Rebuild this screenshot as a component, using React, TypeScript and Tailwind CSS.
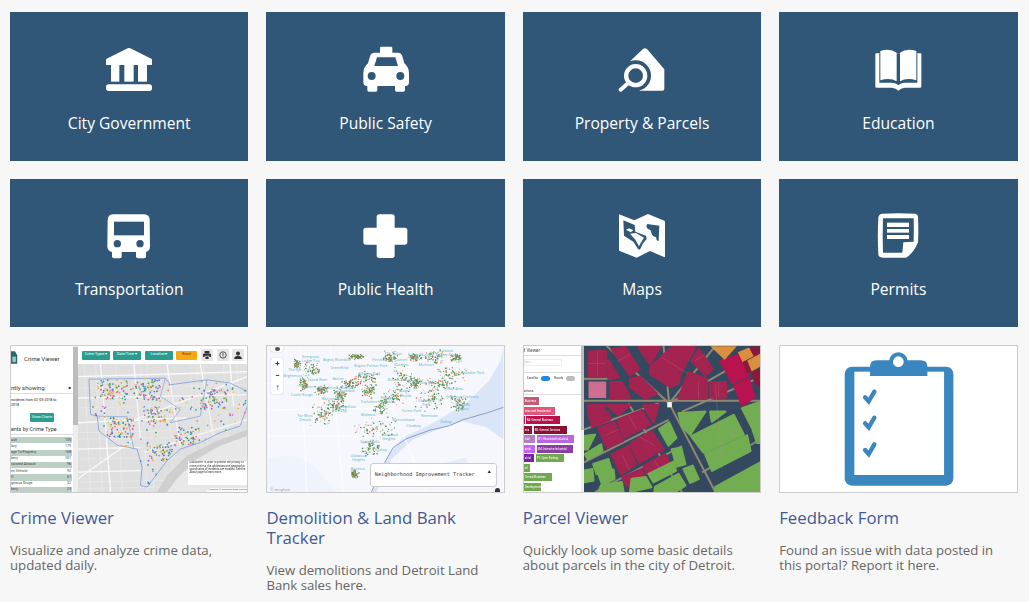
import React from "react";

const TILE = "#305778";

function makeRandom(seed: number) {
  let s = seed;
  return () => {
    s = (s * 16807) % 2147483647;
    return s / 2147483647;
  };
}

function insidePoly(x: number, y: number, poly: number[][]) {
  let hit = false;
  for (let i = 0, j = poly.length - 1; i < poly.length; j = i++) {
    const [xi, yi] = poly[i];
    const [xj, yj] = poly[j];
    if (yi > y !== yj > y && x < ((xj - xi) * (y - yi)) / (yj - yi) + xi) hit = !hit;
  }
  return hit;
}

/* ---------- tile icons, drawn on a 144 unit box ---------- */

function BankIcon() {
  return (
    <>
      <path d="M68 7 Q72 5 76 7 L139 38 Q141 39 141 42 V57 H3 V42 Q3 39 5 38Z" fill="#fff" />
      <rect x="18" y="57" width="25" height="50" fill="#fff" />
      <rect x="58" y="57" width="28" height="50" fill="#fff" />
      <rect x="99" y="57" width="27" height="50" fill="#fff" />
      <rect x="3" y="115" width="138" height="20" rx="8" fill="#fff" />
    </>
  );
}

function TaxiIcon() {
  return (
    <>
      <rect x="54" y="2" width="37" height="22" rx="4" fill="#fff" />
      <path d="M36 20 H109 Q117 20 120 28 L127 52 Q141 64 141 82 V108 Q141 120 130 120 H15 Q4 120 4 108 V82 Q4 64 18 52 L25 28 Q28 20 36 20Z" fill="#fff" />
      <rect x="16" y="110" width="30" height="27" rx="5" fill="#fff" />
      <rect x="99" y="110" width="30" height="27" rx="5" fill="#fff" />
      <path d="M45 34 H100 L108 60 H37Z" fill={TILE} />
      <circle cx="29" cy="90" r="12" fill={TILE} />
      <circle cx="115" cy="90" r="12" fill={TILE} />
    </>
  );
}

function PropertyIcon() {
  return (
    <>
      <path d="M75 9 Q81 4 87 9 L139 70 V128 Q139 134 133 134 H65 L53 89 L36 46Z" fill="#fff" />
      <circle cx="53" cy="89" r="46" fill={TILE} />
      <circle cx="53" cy="89" r="28.5" fill="none" stroke="#fff" strokeWidth="13" />
      <path d="M30 112 L8 131" stroke="#fff" strokeWidth="12" strokeLinecap="round" />
    </>
  );
}

function BookIcon() {
  return (
    <>
      <path d="M4 24 Q4 22 6 22 H140 Q142 22 142 24 V122 Q142 125 138 125 H92 Q80 126 73 134 Q66 126 54 125 H8 Q4 125 4 122Z" fill="#fff" />
      <path d="M16 22 H130 V110 H94 Q80 110 73 118 Q66 110 52 110 H16Z" fill={TILE} />
      <path d="M19 15 Q48 6 68 20 V106 Q48 94 19 103Z" fill="#fff" />
      <path d="M78 20 Q98 6 127 15 V103 Q98 94 78 106Z" fill="#fff" />
    </>
  );
}

function BusIcon() {
  return (
    <>
      <path d="M24 4 H118 Q133 5 134 20 L135 100 Q135 116 120 117 H22 Q8 116 7 100 L8 20 Q9 5 24 4Z" fill="#fff" />
      <rect x="21" y="105" width="29" height="31" rx="6" fill="#fff" />
      <rect x="93" y="105" width="30" height="31" rx="6" fill="#fff" />
      <rect x="27" y="26" width="90" height="41" fill={TILE} />
      <circle cx="37" cy="92" r="11" fill={TILE} />
      <circle cx="105" cy="92" r="11" fill={TILE} />
    </>
  );
}

function PlusIcon() {
  return (
    <>
      <rect x="44" y="4" width="54" height="131" rx="8" fill="#fff" />
      <rect x="4" y="44" width="132" height="51" rx="8" fill="#fff" />
    </>
  );
}

function MapIcon() {
  return (
    <>
      <path d="M3 4 L49 22 L90 3 L139 23 Q141 24 141 26 V131 Q141 133 138 132 L96 114 L56 134 L5 114 Q3 113 3 111Z" fill="#fff" />
      <path d="M16 22 L50 36 L52 56 L84 68 L86 78 L74 92 L66 110 L60 108 L46 86 L18 68Z" fill={TILE} />
      <path d="M24 50 L34 46 L46 52 L38 58Z" fill="#fff" />
      <path d="M36 62 L54 60 L78 74 L68 90 L63 100 L52 80Z" fill="#fff" />
      <path d="M88 33 Q82 40 90 48 Q100 50 100 60 Q104 72 114 72 L116 82 L122 84 L124 38Z" fill={TILE} />
    </>
  );
}

function PermitIcon() {
  return (
    <>
      <path d="M24 2 Q72 -1 122 2 Q131 3 132 12 Q134 50 132 88 Q118 122 96 134 H26 Q14 134 13 124 Q10 70 13 14 Q14 3 24 2Z" fill="#fff" />
      <path d="M27 16 H119 Q120 50 119 86 L88 88 L85 119 H27 Q25 70 27 16Z" fill={TILE} />
      <rect x="39" y="29" width="66" height="13" fill="#fff" />
      <rect x="39" y="48" width="66" height="11" fill="#fff" />
      <rect x="39" y="66" width="66" height="12" fill="#fff" />
    </>
  );
}

const categories = [
  { label: "City Government", Icon: BankIcon },
  { label: "Public Safety", Icon: TaxiIcon },
  { label: "Property & Parcels", Icon: PropertyIcon },
  { label: "Education", Icon: BookIcon },
  { label: "Transportation", Icon: BusIcon },
  { label: "Public Health", Icon: PlusIcon },
  { label: "Maps", Icon: MapIcon },
  { label: "Permits", Icon: PermitIcon },
];

/* ---------- crime viewer thumbnail ---------- */

const crimeOutline = [
  [265, 118], [495, 115], [510, 135], [620, 120], [690, 130], [742, 155], [742, 200], [720, 260],
  [660, 280], [600, 310], [540, 330], [500, 365], [440, 445], [420, 440], [425, 385], [410, 330],
  [350, 318], [295, 275], [290, 230], [270, 225],
];

function crimeDots() {
  const rand = makeRandom(4217);
  const colors = ["#2a9d8f", "#e86fa8", "#e8a33d", "#8a5cc4", "#3f8fd2", "#5aa84f", "#d9d24a"];
  const hot = [[560, 290], [470, 230], [440, 150], [340, 150], [640, 180], [360, 265], [480, 340]];
  const dots: { x: number; y: number; c: string }[] = [];
  while (dots.length < 540) {
    const h = hot[Math.floor(rand() * hot.length)];
    const near = rand() < 0.6;
    const x = near ? h[0] + (rand() - 0.5) * 80 : 265 + rand() * 477;
    const y = near ? h[1] + (rand() - 0.5) * 60 : 115 + rand() * 330;
    if (!insidePoly(x, y, crimeOutline)) continue;
    dots.push({ x, y, c: colors[Math.floor(rand() * colors.length)] });
  }
  return dots;
}

function CrimeMap() {
  const roads = [
    "232,110 742,95", "232,175 742,165", "232,250 560,235", "232,330 420,325", "232,400 420,395",
    "300,72 330,460", "400,72 420,300", "500,72 540,320", "600,72 640,290", "690,72 700,200",
    "380,250 742,110", "430,340 742,240", "232,420 400,300",
  ];
  const streets = [110, 145, 205, 280, 300, 360, 430, 450, 470, 530, 570, 650, 720];
  return (
    <svg viewBox="232 72 510 388" preserveAspectRatio="none" className="block h-full w-full">
      <rect x="232" y="72" width="510" height="388" fill="#dfdfdf" />
      {streets.map((v) => (
        <g key={v}>
          <line x1={v + 140} y1="72" x2={v + 160} y2="460" stroke="#efefef" strokeWidth="1.500" />
          <line x1="232" y1={v} x2="742" y2={v - 10} stroke="#efefef" strokeWidth="1.500" />
        </g>
      ))}
      <path d="M742 270 L640 310 L560 350 L500 410 L470 460 H742Z" fill="#cfcfcf" />
      <path d="M742 290 L660 320 L590 360 L530 420 L500 460 H742Z" fill="#e8e8e8" />
      {roads.map((r) => (
        <polyline key={r} points={r} fill="none" stroke="#fafafa" strokeWidth="4" />
      ))}
      <polygon points={crimeOutline.map((p) => p.join(",")).join(" ")} fill="#e9e9ec" fillOpacity="0.25" stroke="#7f9fe0" strokeWidth="2.500" />
      <polyline points="495,115 480,170 540,210 510,250 600,230 620,120" fill="none" stroke="#7f9fe0" strokeWidth="2" />
      <polyline points="290,230 380,232 400,330" fill="none" stroke="#7f9fe0" strokeWidth="2" />
      {crimeDots().map((d, i) => (
        <circle key={i} cx={d.x} cy={d.y} r="2.6" fill={d.c} />
      ))}
    </svg>
  );
}

function CrimeThumb() {
  const rows = [
    ["ault", "105", true], ["lary", "179", false], ["age To Property", "108", true],
    ["bery", "101", false], ["ravated Assault", "96", true], ["en Vehicle", "92", false],
    ["ft", "61", true], ["gerous Drugs", "32", false], ["bery", "23", true],
  ] as const;
  return (
    <div className="flex h-full blur-[0.7px] font-['Roboto',sans-serif]">
      <div className="flex w-[62px] shrink-0 flex-col overflow-hidden bg-white">
        <div className="flex h-[24px] shrink-0 items-center">
          <svg viewBox="0 0 18 30" className="h-[30px] w-[8px] shrink-0">
            <path d="M0 0 H9 L14 9 V28 H0Z" fill="#2a6a6a" />
            <rect x="3" y="12" width="8" height="12" fill="#9cc7c2" />
          </svg>
          <span className="ml-[5px] whitespace-nowrap text-[6px] text-[#333]">Crime Viewer</span>
        </div>
        <div className="mt-[14px] flex items-center justify-between border-b border-[#ddd] pb-[1px] pr-[2px]">
          <span className="whitespace-nowrap text-[6px] leading-[8px] text-[#333]">ntly showing:</span>
          <span className="text-[4px] leading-[8px] text-[#222]">■</span>
        </div>
        <p className="mt-[3px] whitespace-nowrap text-[3.6px] leading-[6px] text-[#222]">ncidents from 02-03-2018 to</p>
        <p className="whitespace-nowrap text-[3.6px] leading-[5px] text-[#222]">2018</p>
        <div className="mt-[5px] self-center rounded-[1px] bg-[#2a9d8f] px-[2px] py-[2px] text-[3.6px] leading-[5px] text-white">Show Charts</div>
        <div className="mt-[3px] whitespace-nowrap border-b border-[#ddd] text-[5.4px] leading-[9px] text-[#333]">ents by Crime Type</div>
        <div className="mt-[2px] pr-[1px]">
          {rows.map(([name, count, shaded], i) => (
            <div key={i} className={`flex h-[6.2px] items-center justify-between pr-[1px] text-[3.6px] text-[#444] ${shaded ? "bg-[#bdd0c6]" : "bg-white"}`}>
              <span className="whitespace-nowrap">{name}</span>
              <span>{count}</span>
            </div>
          ))}
        </div>
      </div>
      <div className="flex w-[5px] shrink-0 flex-col bg-[#eee]">
        <div className="mt-[1px] h-[78px] bg-[#bcbcbc]" />
      </div>
      <div className="flex min-w-0 flex-1 flex-col">
        <div className="flex h-[18px] shrink-0 items-center bg-white pl-[4px]">
          <div className="flex h-[9px] w-[28px] items-center justify-center rounded-[1px] bg-[#2a9d8f] text-[3.6px] text-white">Crime Types ▾</div>
          <div className="ml-[3px] flex h-[9px] w-[28px] items-center justify-center rounded-[1px] bg-[#2a9d8f] text-[3.6px] text-white">Date/Time ▾</div>
          <div className="ml-[4px] flex h-[9px] w-[28px] items-center justify-center rounded-[1px] bg-[#2a9d8f] text-[3.6px] text-white">Location ▾</div>
          <div className="ml-[3px] flex h-[9px] w-[21px] items-center justify-center rounded-[1px] bg-[#f7a90e] text-[3.6px] text-[#444]">Reset</div>
          <div className="ml-[4px] flex h-[12px] w-[12px] items-center justify-center rounded-[1px] bg-[#e6e6e6] text-[#333]">
            <svg viewBox="0 0 10 10" className="h-[8px] w-[8px]" fill="currentColor"><path d="M2 0H8V3H2ZM0 3.500H10V7.500H8V6H2V7.500H0ZM3 7H7V10H3Z" /></svg>
          </div>
          <div className="ml-[4px] flex h-[12px] w-[12px] items-center justify-center rounded-[1px] bg-[#e6e6e6]">
            <svg viewBox="0 0 10 10" className="h-[8px] w-[8px]" fill="none" stroke="#333"><circle cx="5" cy="5" r="4" /><path d="M5 2.500V6M5 7V8" /></svg>
          </div>
          <div className="ml-[3px] flex h-[12px] w-[12px] items-center justify-center rounded-[1px] bg-[#e6e6e6] text-[#333]">
            <svg viewBox="0 0 10 10" className="h-[8px] w-[8px]" fill="currentColor"><circle cx="5" cy="3" r="2.500" /><path d="M0 10Q1 6 5 6T10 10Z" /></svg>
          </div>
        </div>
        <div className="relative min-h-0 flex-1">
          <CrimeMap />
          <div className="absolute bottom-[7px] right-0 h-[24px] w-[59px] overflow-hidden bg-white pl-[1px] text-[2.8px] leading-[3.4px] text-[#333]">
            Disclaimer: In order to protect the privacy of crime victims, the addresses and geographic coordinates of incidents are masked. See the About page to learn more.
          </div>
          <div className="absolute bottom-0 right-0 whitespace-nowrap bg-white/70 text-[2.4px] leading-[4px] text-[#666]">© Mapbox © OpenStreetMap Improve</div>
        </div>
      </div>
    </div>
  );
}

/* ---------- demolition thumbnail ---------- */

const demoLabels: [string, number, number][] = [
  ["Evergreen", 152, 52], ["Lodge Trio", 152, 65], ["Bagley Rosedale", 230, 60], ["Regent", 300, 78], ["Palmer Park", 352, 80],
  ["Pershing", 360, 60], ["Nolan", 412, 43], ["Krainz Woods", 480, 45], ["Conant", 425, 60], ["Gardens", 425, 76],
  ["Burbank", 560, 33], ["Regent Park", 560, 47], ["Mohican", 500, 77], ["The Eye", 104, 90], ["Brightmoor", 98, 110],
  ["Grand River", 172, 122], ["Greenfield", 238, 85], ["Barton", 235, 120], ["Virginia Park", 330, 104], ["Boston Edison", 420, 122],
  ["Airport Sub", 495, 130], ["Chandler Park", 640, 100], ["Pride Area", 585, 150], ["Fiskhorn", 145, 142], ["Grandmont", 205, 146],
  ["Midtown", 262, 145], ["Rosedale", 262, 155], ["Castle Rouge", 125, 168], ["Russell", 435, 156], ["Woods", 438, 170],
  ["Jefferson Chalmers", 610, 175], ["Warrendale", 215, 180], ["Buena Vista", 258, 203], ["Core City", 238, 215], ["Yorkshire", 328, 188],
  ["Herman", 385, 178], ["Franklin", 385, 190], ["Elmwood", 500, 185], ["Park", 500, 198], ["Forest Park", 456, 215],
  ["Belle Isle", 610, 198], ["Harbor", 610, 210], ["Far West", 135, 232], ["Detroit", 135, 244], ["Rivertown", 510, 230],
  ["Midwest", 325, 228], ["Mexicantown", 432, 243], ["Chadsey", 462, 262], ["Delray", 560, 250], ["Oakwood", 390, 290],
  ["Heights", 388, 302], ["Springwells", 330, 312], ["Delray", 366, 335], ["Oakwood", 296, 352], ["Heights", 296, 365],
  ["Boynton", 294, 392],
];

function demoDots() {
  const rand = makeRandom(991);
  const clusters = [
    [155, 88, 16, 14], [185, 150, 14, 10], [240, 160, 12, 12], [185, 225, 22, 22], [320, 112, 22, 14], [330, 150, 16, 16],
    [365, 200, 14, 18], [345, 265, 40, 22], [335, 325, 18, 18], [285, 405, 8, 8], [430, 110, 22, 20], [410, 165, 25, 18],
    [525, 50, 18, 14], [590, 50, 12, 10], [575, 100, 30, 14], [540, 130, 30, 12], [515, 175, 28, 26], [290, 48, 18, 6],
    [390, 50, 15, 12], [465, 50, 14, 8], [110, 70, 8, 10], [130, 130, 8, 14], [230, 195, 20, 14], [470, 130, 12, 12],
    [600, 190, 18, 14], [270, 130, 18, 10],
  ];
  const dots: { x: number; y: number; c: string; r: number }[] = [];
  clusters.forEach(([cx, cy, sx, sy]) => {
    for (let i = 0; i < 70; i++) {
      const pick = rand();
      dots.push({
        x: cx + (rand() + rand() - 1) * sx * 1.7,
        y: cy + (rand() + rand() - 1) * sy * 1.7,
        r: 1 + rand() * 1.6,
        c: pick < 0.68 ? "#4f8f4c" : pick < 0.84 ? "#e2685b" : pick < 0.9 ? "#e8a33d" : "#a9c7a4",
      });
    }
  });
  return dots;
}

function DemolitionMap() {
  return (
    <svg viewBox="20 15 713 445" preserveAspectRatio="none" className="block h-full w-full">
      <rect x="20" y="15" width="713" height="445" fill="#f5f7fd" />
      <path d="M733 15 L725 60 L690 120 L620 190 L520 250 L430 295 L390 340 L365 390 L335 460 H350 L395 360 L460 300 L540 268 L610 245 L680 262 L733 300Z" fill="#dbe5f8" />
      <path d="M20 360 Q90 330 160 380 L230 460 H20Z" fill="#eff3fb" />
      <path d="M560 370 L620 355 L640 410 L590 420Z" fill="#e6ecfa" />
      {["120,15 140,460", "20,210 400,205", "210,15 250,460", "20,130 600,110", "320,210 520,15", "400,205 500,460", "20,290 330,290", "440,15 460,220"].map((r) => (
        <polyline key={r} points={r} fill="none" stroke="#fcfdff" strokeWidth="3" />
      ))}
      {demoDots().map((d, i) => (
        <circle key={i} cx={d.x} cy={d.y} r={d.r} fill={d.c} />
      ))}
      {demoLabels.map(([t, x, y], i) => (
        <text key={i} x={x} y={y} textAnchor="middle" fontSize="11" fill="#5cb0c4" fontFamily="Open Sans, sans-serif">{t}</text>
      ))}
      <polyline points="733,202 680,220 610,240 570,258 510,272 440,298 400,325 375,370 335,460" fill="none" stroke="#7c8fbc" strokeWidth="2.500" />
    </svg>
  );
}

function DemolitionThumb() {
  return (
    <div className="relative h-full blur-[0.6px]">
      <DemolitionMap />
      <div className="absolute left-[4px] top-0 flex h-[6px] w-[12px] items-end justify-center rounded-b-[2px] bg-white shadow-[0_0_1px_rgba(0,0,0,0.4)]">
        <div className="mb-[1px] h-[4px] w-[5px] rounded-full bg-[#555]" />
      </div>
      <div className="absolute left-[4px] top-[12px] flex w-[12px] flex-col items-center rounded-[2px] bg-white font-['Roboto',sans-serif] text-[8px] font-bold leading-[12px] text-[#333] shadow-[0_0_1px_rgba(0,0,0,0.4)]">
        <span>+</span>
        <span>−</span>
        <span>↑</span>
      </div>
      <div className="absolute bottom-[5px] right-[7px] flex h-[24px] w-[127px] items-center justify-between rounded-[3px] border border-[#ccc] bg-white pl-[4px] pr-[4px]">
        <span className="whitespace-nowrap font-['DejaVu_Sans_Mono',monospace] text-[5.2px] text-[#333]">Neighborhood Improvement Tracker</span>
        <span className="mb-[8px] text-[5px] leading-none text-[#222]">▲</span>
      </div>
      <div className="absolute bottom-0 right-[4px] h-[4px] w-[5px] rounded-t-full bg-[#333]" />
      <span className="absolute bottom-0 left-[3px] text-[4px] leading-[5px] text-[#999]">© mapbox</span>
    </div>
  );
}

/* ---------- parcel viewer thumbnail ---------- */

const crimson = [
  "222,32 272,30 272,108 222,108", "290,25 330,18 372,85 345,105", "370,18 435,18 405,70", "280,60 312,110 280,115",
  "470,18 540,18 495,100 490,130 465,140 405,100 405,80", "550,25 592,85 570,105 530,60", "345,115 375,108 425,160 390,175 345,140",
  "287,125 320,125 345,172 287,175", "520,95 575,115 575,175 490,175", "585,125 632,125 632,172 585,172",
  "220,195 268,195 268,220 220,220", "222,225 280,215 285,240 232,262", "275,195 345,195 310,225", "385,195 430,195 415,248",
  "308,240 380,210 405,255 325,295", "250,265 298,248 322,305 275,325", "345,312 410,275 445,330 372,370", "290,345 340,320 362,375 318,405",
  "385,380 450,345 465,375 395,405", "322,415 380,390 388,420 335,442",
];
const bright = ["615,60 668,42 700,105 650,128", "655,135 700,112 718,170 680,198"];
const maroon = ["700,20 735,18 735,45 712,45", "685,65 705,55 715,90 695,95", "708,95 735,85 735,140 720,130"];
const orange = ["590,18 660,18 628,55", "670,35 700,22 712,45 682,60", "698,60 735,40 735,75 710,90"];
const green = [
  "432,268 462,248 483,295 460,318", "490,220 570,215 525,285 500,260", "585,215 630,215 590,245", "528,290 655,225 685,285 565,340",
  "570,345 695,288 705,335 590,395", "680,205 735,185 735,260 710,265", "712,270 735,262 735,310 725,310", "207,290 240,285 218,330 207,330",
  "210,345 258,315 262,335 218,360", "235,375 280,360 288,388 245,405", "250,405 295,392 298,420 262,438", "400,405 475,368 482,395 415,430",
  "350,420 392,415 408,445 345,460", "420,445 490,405 510,440 480,460 418,460", "505,390 532,380 550,420 525,432", "470,330 498,325 510,375 485,382",
  "258,440 320,430 325,460 250,460", "600,445 735,370 735,460 600,460", "207,395 232,390 235,425 207,430",
];
const parcelRoads = [
  "207,182 735,182", "207,115 290,115", "275,15 462,190", "445,15 462,190", "462,190 600,15", "462,190 735,30", "462,190 600,460",
  "207,270 430,190", "207,370 460,240", "240,460 500,320", "500,215 735,110", "560,400 735,300", "340,190 500,460",
];
const lotLines = [
  "247,30 247,108", "222,68 272,68", "310,60 345,40", "440,50 520,100", "540,60 570,40", "550,125 550,175", "610,125 610,172",
  "340,225 365,270", "370,290 420,320", "275,285 310,270", "320,345 345,395", "420,365 435,395", "600,130 620,390", "640,250 660,300",
];

function ParcelMap() {
  return (
    <svg viewBox="207 15 528 445" preserveAspectRatio="none" className="block h-full w-full">
      <rect x="207" y="15" width="528" height="445" fill="#34495f" />
      {parcelRoads.map((r) => (
        <polyline key={r} points={r} fill="none" stroke="#8f8873" strokeWidth="6" />
      ))}
      {crimson.map((p) => <polygon key={p} points={p} fill="#a32450" stroke="#a32450" strokeWidth="7" strokeLinejoin="round" />)}
      <polygon points="222,125 272,125 272,172 222,172" fill="#cf6e8e" stroke="#cf6e8e" strokeWidth="3" />
      {bright.map((p) => <polygon key={p} points={p} fill="#b8134f" stroke="#b8134f" strokeWidth="5" />)}
      {maroon.map((p) => <polygon key={p} points={p} fill="#8a1a3a" stroke="#8a1a3a" strokeWidth="4" />)}
      {orange.map((p) => <polygon key={p} points={p} fill="#d98f3d" stroke="#d98f3d" strokeWidth="4" />)}
      {green.map((p) => <polygon key={p} points={p} fill="#72ad52" stroke="#72ad52" strokeWidth="7" strokeLinejoin="round" />)}
      {lotLines.map((l) => (
        <polyline key={l} points={l} fill="none" stroke="#d08aa0" strokeOpacity="0.45" strokeWidth="1.500" />
      ))}
      <rect x="456" y="186" width="14" height="16" fill="#f4f4f4" />
    </svg>
  );
}

function Chip({ className, children }: { className: string; children?: React.ReactNode }) {
  return (
    <div className={`flex h-[8px] items-center whitespace-nowrap pl-[1px] text-[2.8px] text-white ${className}`}>
      {children}
    </div>
  );
}

function ParcelThumb() {
  return (
    <div className="flex h-full blur-[0.7px] font-['Roboto',sans-serif]">
      <div className="flex w-[57px] shrink-0 flex-col overflow-hidden bg-white">
        <div className="mt-[1px] border-b border-[#ddd] pb-[1px] text-[4.5px] leading-[7px] text-[#444]">t Viewer</div>
        <div className="mt-[3px] h-[7px] w-[38px] rounded-[1px] border border-[#eee] text-[3px] leading-[5px] text-[#bbb]">tion...</div>
        <div className="mt-[6px] flex items-center gap-[3px] border-t border-[#ddd] pt-[3px] text-[3.2px] text-[#444]">
          <span className="ml-[3px]">Satellite</span>
          <span className="h-[5px] w-[9px] rounded-full bg-[#1e88e5]" />
          <span className="ml-[1px]">Roads</span>
          <span className="h-[5px] w-[9px] rounded-full bg-[#bbb]" />
        </div>
        <div className="mt-[7px] border-b border-[#ddd] text-[3.6px] leading-[6px] text-[#444]">ations</div>
        <div className="mt-[2px] flex flex-col gap-[1.500px]">
          <Chip className="w-[15px] bg-[#c25b74]">Business</Chip>
          <Chip className="w-[31px] bg-[#e0567a]">ness and Residential</Chip>
          <div className="flex gap-[1px]"><Chip className="w-[1px] bg-[#b6124c]" /><Chip className="w-[34px] bg-[#b6124c]">B4: General Business</Chip></div>
          <div className="flex gap-[2px]"><Chip className="w-[8px] bg-[#8f1235]">ess</Chip><Chip className="w-[33px] bg-[#8b0f33]">B5: General Services</Chip></div>
          <div className="flex gap-[2px]"><Chip className="w-[11px] bg-[#b27fc0]">trial</Chip><Chip className="w-[37px] bg-[#b867dc]">M1: Restricted Industrial</Chip></div>
          <div className="flex gap-[2px]"><Chip className="w-[11px] bg-[#c264ef]">strial</Chip><Chip className="w-[36px] bg-[#8b3fa5]">M4: Intensive Industrial</Chip></div>
          <div className="flex gap-[2px]"><Chip className="w-[10px] bg-[#7a21a6]">strial</Chip><Chip className="w-[28px] bg-[#72a84f]">P1: Open Parking</Chip></div>
          <Chip className="w-[6px] bg-[#72a84f]">ial</Chip>
          <Chip className="w-[28px] bg-[#72a84f]">Central Business</Chip>
          <Chip className="w-[17px] bg-[#72a84f]">Development</Chip>
          <Chip className="w-[17px] bg-[#72a84f]" />
        </div>
      </div>
      <div className="flex w-[3px] shrink-0 flex-col bg-[#eee]">
        <div className="h-[84px] bg-[#bcbcbc]" />
      </div>
      <div className="min-w-0 flex-1">
        <ParcelMap />
      </div>
    </div>
  );
}

/* ---------- feedback thumbnail ---------- */

function Check({ y }: { y: number }) {
  return <path d={`M285 ${y} L296 ${y + 12} L313 ${y - 17}`} fill="none" stroke="#3a87c0" strokeWidth="13" strokeLinecap="round" strokeLinejoin="miter" />;
}

function FeedbackThumb() {
  return (
    <svg viewBox="30 18 709 438" preserveAspectRatio="none" className="block h-full w-full bg-white blur-[0.3px]">
      <rect x="224" y="80" width="326" height="357" rx="22" fill="#3a87c0" />
      <rect x="253" y="95" width="269" height="310" fill="#fff" />
      <path d="M300 108 V80 Q300 61 319 61 H452 Q472 61 472 80 V108Z" fill="#3a87c0" />
      <circle cx="385" cy="65" r="28" fill="#3a87c0" />
      <circle cx="385" cy="65" r="16" fill="#fff" />
      <Check y={172} />
      <Check y={250} />
      <Check y={330} />
    </svg>
  );
}

const cards = [
  { title: "Crime Viewer", text: "Visualize and analyze crime data, updated daily.", Thumb: CrimeThumb },
  { title: "Demolition & Land Bank Tracker", text: "View demolitions and Detroit Land Bank sales here.", Thumb: DemolitionThumb },
  { title: "Parcel Viewer", text: "Quickly look up some basic details about parcels in the city of Detroit.", Thumb: ParcelThumb },
  { title: "Feedback Form", text: "Found an issue with data posted in this portal? Report it here.", Thumb: FeedbackThumb },
];

export default function App() {
  return (
    <div className="h-[602px] overflow-hidden bg-[#f7f7f7] font-['Open_Sans',sans-serif]">
      <div className="grid grid-cols-4 gap-x-[18px] gap-y-[18px] pl-[10px] pr-[11.4px] pt-[12px]">
        {categories.map(({ label, Icon }) => (
          <a key={label} className="flex h-[148.6px] flex-col items-center bg-[#305778] pt-[34px] text-white">
            <svg viewBox="0 0 144 144" className="h-12 w-12">
              <Icon />
            </svg>
            <span className="mt-[16.7px] text-[15.6px] leading-[24px]">{label}</span>
          </a>
        ))}
        {cards.map(({ title, text, Thumb }) => (
          <div key={title}>
            <div className="h-[148px] overflow-hidden border border-[#ccc] bg-white">
              <Thumb />
            </div>
            <h3 className="mt-[15px] text-[16.8px] font-normal leading-[20px] text-[#3e5a98]">{title}</h3>
            <p className="mt-[15px] pr-[10px] text-[13.2px] leading-[15px] text-[#666]">{text}</p>
          </div>
        ))}
      </div>
    </div>
  );
}
